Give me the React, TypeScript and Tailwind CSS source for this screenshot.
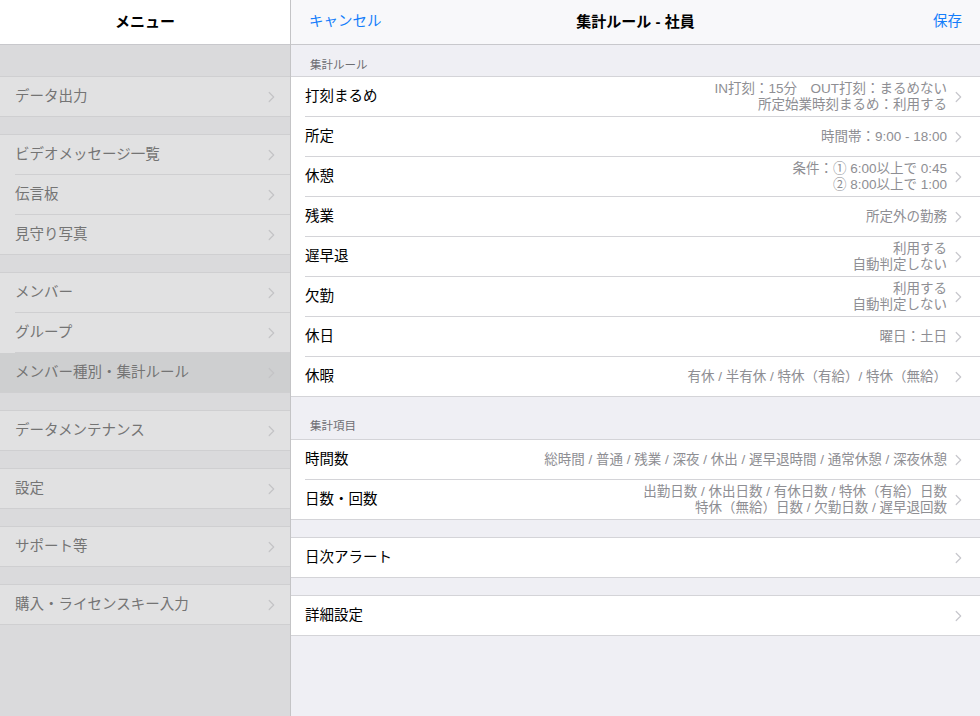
import React from 'react';

type Row = {
  label: string;
  detail?: string[];
  selected?: boolean;
};

const menuGroups: Row[][] = [
  [{ label: 'データ出力' }],
  [{ label: 'ビデオメッセージ一覧' }, { label: '伝言板' }, { label: '見守り写真' }],
  [{ label: 'メンバー' }, { label: 'グループ' }, { label: 'メンバー種別・集計ルール', selected: true }],
  [{ label: 'データメンテナンス' }],
  [{ label: '設定' }],
  [{ label: 'サポート等' }],
  [{ label: '購入・ライセンスキー入力' }]
];

const ruleRows: Row[] = [
  { label: '打刻まるめ', detail: ['IN打刻：15分　OUT打刻：まるめない', '所定始業時刻まるめ：利用する'] },
  { label: '所定', detail: ['時間帯：9:00 - 18:00'] },
  { label: '休憩', detail: ['条件：① 6:00以上で 0:45', '② 8:00以上で 1:00'] },
  { label: '残業', detail: ['所定外の勤務'] },
  { label: '遅早退', detail: ['利用する', '自動判定しない'] },
  { label: '欠勤', detail: ['利用する', '自動判定しない'] },
  { label: '休日', detail: ['曜日：土日'] },
  { label: '休暇', detail: ['有休 / 半有休 / 特休（有給）/ 特休（無給）'] }
];

const itemRows: Row[] = [
  { label: '時間数', detail: ['総時間 / 普通 / 残業 / 深夜 / 休出 / 遅早退時間 / 通常休憩 / 深夜休憩'] },
  {
    label: '日数・回数',
    detail: ['出勤日数 / 休出日数 / 有休日数 / 特休（有給）日数', '特休（無給）日数 / 欠勤日数 / 遅早退回数']
  }
];

function Chevron({ className }: { className?: string }) {
  return (
    <svg className={className} width="7" height="12" viewBox="0 0 7 12" fill="none">
      <path d="M1.2 1.5l4.5 4.5-4.5 4.5" stroke="currentColor" strokeWidth="1.2" strokeLinecap="round" strokeLinejoin="round" />
    </svg>
  );
}

function MenuGroup({ rows }: { rows: Row[] }) {
  return (
    <div className="border-y border-[#cfcfd1] bg-[#e1e1e2]">
      {rows.map((row, i) => (
        <div className={`pl-[15px] ${row.selected ? 'bg-[#cecfd0]' : ''}`} key={row.label}>
          <div
            className={`flex items-center justify-between pr-[15px] ${
              i < rows.length - 1 ? 'h-[40px] border-b border-[#cfcfd1]' : 'h-[39px]'
            }`}
          >
            <span className="text-[14.5px] leading-none text-[#747474]">{row.label}</span>
            <Chevron className="text-[#c4c4c6]" />
          </div>
        </div>
      ))}
    </div>
  );
}

function SettingsGroup({ rows }: { rows: Row[] }) {
  return (
    <div className="border-y border-[#d4d4d8] bg-white">
      {rows.map((row, i) => (
        <div className="pl-[14px]" key={row.label}>
          <div
            className={`flex items-center justify-between pr-[18px] ${
              i < rows.length - 1 ? 'h-[40px] border-b border-[#d4d4d8]' : 'h-[39px]'
            }`}
          >
            <span className="text-[14.5px] leading-none text-black">{row.label}</span>
            <div className="flex items-center gap-[8px]">
              {row.detail ? (
                <div className="text-right text-[13.5px] leading-[16px] text-[#8e8e93]">
                  {row.detail.map((line) => (
                    <div className="whitespace-pre" key={line}>
                      {line}
                    </div>
                  ))}
                </div>
              ) : null}
              <Chevron className="text-[#c7c7cc]" />
            </div>
          </div>
        </div>
      ))}
    </div>
  );
}

export default function App() {
  return (
    <div className="flex h-[716px] w-[980px] overflow-hidden font-['Liberation_Sans','Noto_Sans_CJK_JP',sans-serif]">
      <aside className="flex w-[291px] shrink-0 flex-col border-r border-[#c4c4c6] bg-[#dadadc]">
        <div className="flex h-[45px] items-center justify-center border-b border-[#c8c8cc] bg-white">
          <span className="text-[15px] font-bold text-black">メニュー</span>
        </div>
        <div className="h-[31px]" />
        <div className="flex flex-col gap-[17px]">
          {menuGroups.map((group) => (
            <MenuGroup key={group[0].label} rows={group} />
          ))}
        </div>
      </aside>

      <main className="flex flex-1 flex-col bg-[#efeff4]">
        <div className="grid h-[45px] grid-cols-[1fr_auto_1fr] items-center border-b border-[#c8c8cc] bg-[#f8f8fa] px-[18px]">
          <span className="text-[14.5px] text-[#157efb]">キャンセル</span>
          <span className="text-[15px] font-bold text-black">集計ルール - 社員</span>
          <span className="text-right text-[14.5px] text-[#157efb]">保存</span>
        </div>

        <div className="flex h-[31px] items-end pb-[5px] pl-[19px]">
          <span className="text-[11.5px] leading-none text-[#6d6d72]">集計ルール</span>
        </div>
        <SettingsGroup rows={ruleRows} />

        <div className="flex h-[42px] items-end pb-[7px] pl-[19px]">
          <span className="text-[11.5px] leading-none text-[#6d6d72]">集計項目</span>
        </div>
        <SettingsGroup rows={itemRows} />

        <div className="h-[17px]" />
        <SettingsGroup rows={[{ label: '日次アラート' }]} />

        <div className="h-[17px]" />
        <SettingsGroup rows={[{ label: '詳細設定' }]} />
      </main>
    </div>
  );
}
